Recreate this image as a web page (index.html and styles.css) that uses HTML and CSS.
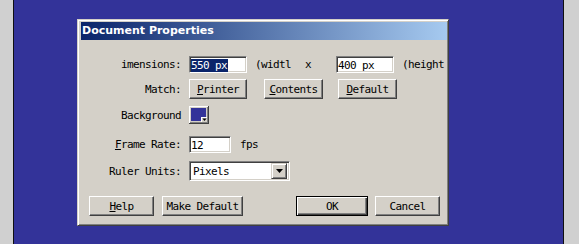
FILE: index.html
```html
<!DOCTYPE html>
<html>
<head>
<meta charset="utf-8">
<link rel="stylesheet" href="styles.css">
</head>
<body>
<div class="screen">
  <div class="side side-left"></div>
  <div class="desktop">
    <div class="dialog">
      <div class="titlebar">Document Properties</div>
      <div class="content">
        <div class="row r1">
          <span class="label">imensions:</span>
          <span class="field w58"><span class="sel">550 px</span></span>
          <span class="txt ml8">(widtl</span>
          <span class="txt ml14">x</span>
          <span class="field w58 ml25">400 px</span>
          <span class="txt ml8">(height</span>
        </div>
        <div class="row r2">
          <span class="label">Match:</span>
          <span class="btn w58"><u>P</u>rinter</span>
          <span class="btn w59 ml17"><u>C</u>ontents</span>
          <span class="btn w59 ml15"><u>D</u>efault</span>
        </div>
        <div class="row r3">
          <span class="label">Background</span>
          <svg class="swatch" width="20" height="18" viewBox="0 0 20 18">
            <rect x="0" y="0" width="20" height="18" fill="#d4d0c8"/>
            <rect x="0" y="0" width="20" height="1" fill="#ffffff"/>
            <rect x="0" y="0" width="1" height="18" fill="#ffffff"/>
            <rect x="0" y="17" width="20" height="1" fill="#404040"/>
            <rect x="19" y="0" width="1" height="18" fill="#404040"/>
            <rect x="1" y="16" width="18" height="1" fill="#808080"/>
            <rect x="18" y="1" width="1" height="16" fill="#808080"/>
            <rect x="2" y="2" width="15" height="13" fill="#333399"/>
            <rect x="12" y="11" width="6" height="5" fill="#d4d0c8"/>
            <rect x="12" y="11" width="6" height="1" fill="#ffffff"/>
            <rect x="12" y="11" width="1" height="5" fill="#ffffff"/>
            <polygon points="13.5,12.5 17.5,12.5 15.5,15" fill="#000000"/>
          </svg>
        </div>
        <div class="row r4">
          <span class="label"><u>F</u>rame Rate:</span>
          <span class="field w42">12</span>
          <span class="txt ml9">fps</span>
        </div>
        <div class="row r5">
          <span class="label">Ruler Units:</span>
          <span class="select">
            <span class="select-text">Pixels</span>
            <span class="drop">
              <svg width="7" height="4" viewBox="0 0 7 4"><polygon points="0,0 7,0 3.5,4" fill="#000"/></svg>
            </span>
          </span>
        </div>
        <div class="row r6">
          <span class="btn w65 ml10"><u>H</u>elp</span>
          <span class="btn w81 ml8">Make Default</span>
          <span class="btn ok w72 ml53">OK</span>
          <span class="btn w65 ml7">Cancel</span>
        </div>
      </div>
    </div>
  </div>
  <div class="side side-right"></div>
</div>
</body>
</html>
```

FILE: styles.css
```css
html, body {
  margin: 0;
  padding: 0;
}
body {
  width: 579px;
  height: 244px;
  overflow: hidden;
  background: #d4d0c8;
}
.screen {
  display: flex;
  width: 579px;
  height: 244px;
}
.side {
  background: #d0d0d0;
  height: 244px;
}
.side-left { width: 13px; }
.side-right { width: 15px; }
.desktop {
  flex: 1;
  background: #333399;
  border-left: 1px solid #101010;
  border-right: 1px solid #101010;
  height: 244px;
}
.dialog {
  box-sizing: border-box;
  width: 372px;
  height: 207px;
  margin-left: 63px;
  margin-top: 19px;
  background: #d4d0c8;
  border-top: 1px solid #d4d0c8;
  border-left: 1px solid #d4d0c8;
  border-right: 1px solid #404040;
  border-bottom: 1px solid #404040;
  box-shadow: inset 1px 1px #ffffff, inset -1px -1px #808080;
  padding: 1px 1px 1px 1px;
  display: flex;
  flex-direction: column;
}
.titlebar {
  height: 18px;
  margin: 1px 0 0 2px;
  background: linear-gradient(to right, #0a246a, #a6caf0);
  color: #ffffff;
  font-family: "DejaVu Sans", Verdana, sans-serif;
  font-weight: bold;
  font-size: 11px;
  line-height: 18px;
  padding-left: 1px;
  white-space: nowrap;
}
.content {
  font-family: "DejaVu Sans Mono", "Liberation Mono", monospace;
  font-size: 11px;
  letter-spacing: -0.62px;
  color: #000;
  display: flex;
  flex-direction: column;
  margin-left: 0;
}
.row {
  display: flex;
  align-items: center;
  white-space: nowrap;
}
.r1 { margin-top: 16px; height: 17px; }
.r2 { margin-top: 6px; height: 20px; }
.r3 { margin-top: 7px; height: 18px; }
.r4 { margin-top: 12px; height: 17px; }
.r5 { margin-top: 8px; height: 20px; }
.r6 { margin-top: 15px; height: 20px; }
.label {
  width: 102px;
  text-align: right;
  margin-right: 8px;
  flex: none;
}
.txt { flex: none; }
.ml7 { margin-left: 7px; }
.ml8 { margin-left: 8px; }
.ml9 { margin-left: 9px; }
.ml10 { margin-left: 10px; }
.ml14 { margin-left: 14px; }
.ml15 { margin-left: 15px; }
.ml17 { margin-left: 17px; }
.ml25 { margin-left: 25px; }
.ml53 { margin-left: 53px; }
.w42 { width: 42px; }
.w58 { width: 58px; }
.w59 { width: 59px; }
.w65 { width: 65px; }
.w72 { width: 72px; }
.w81 { width: 81px; }
.field {
  box-sizing: border-box;
  height: 17px;
  background: #ffffff;
  border-top: 1px solid #808080;
  border-left: 1px solid #808080;
  border-right: 1px solid #ffffff;
  border-bottom: 1px solid #ffffff;
  box-shadow: inset 1px 1px #404040, inset -1px -1px #d4d0c8;
  padding: 1px 1px 0 1px;
  line-height: 13px;
  flex: none;
  display: flex;
  align-items: center;
}
.sel {
  background: #0a246a;
  color: #ffffff;
  line-height: 13px;
  padding-right: 1px;
}
.btn {
  box-sizing: border-box;
  height: 20px;
  background: #d4d0c8;
  border-top: 1px solid #ffffff;
  border-left: 1px solid #ffffff;
  border-right: 1px solid #404040;
  border-bottom: 1px solid #404040;
  box-shadow: inset -1px -1px #808080;
  display: flex;
  align-items: center;
  justify-content: center;
  flex: none;
  padding-top: 1px;
}
.btn.ok {
  border: 1px solid #000000;
  box-shadow: inset 1px 1px #ffffff, inset -1px -1px #404040, inset -2px -2px #808080;
}
.swatch {
  display: block;
  flex: none;
}
.select {
  box-sizing: border-box;
  width: 101px;
  height: 20px;
  background: #ffffff;
  border-top: 1px solid #808080;
  border-left: 1px solid #808080;
  border-right: 1px solid #ffffff;
  border-bottom: 1px solid #ffffff;
  box-shadow: inset 1px 1px #404040, inset -1px -1px #d4d0c8;
  display: flex;
  align-items: center;
  padding: 2px 2px 2px 3px;
  flex: none;
}
.select-text {
  flex: 1;
}
.drop {
  box-sizing: border-box;
  width: 16px;
  height: 16px;
  background: #d4d0c8;
  border-top: 1px solid #d4d0c8;
  border-left: 1px solid #d4d0c8;
  border-right: 1px solid #404040;
  border-bottom: 1px solid #404040;
  box-shadow: inset 1px 1px #ffffff, inset -1px -1px #808080;
  display: flex;
  align-items: center;
  justify-content: center;
}
.drop svg { display: block; }
```
